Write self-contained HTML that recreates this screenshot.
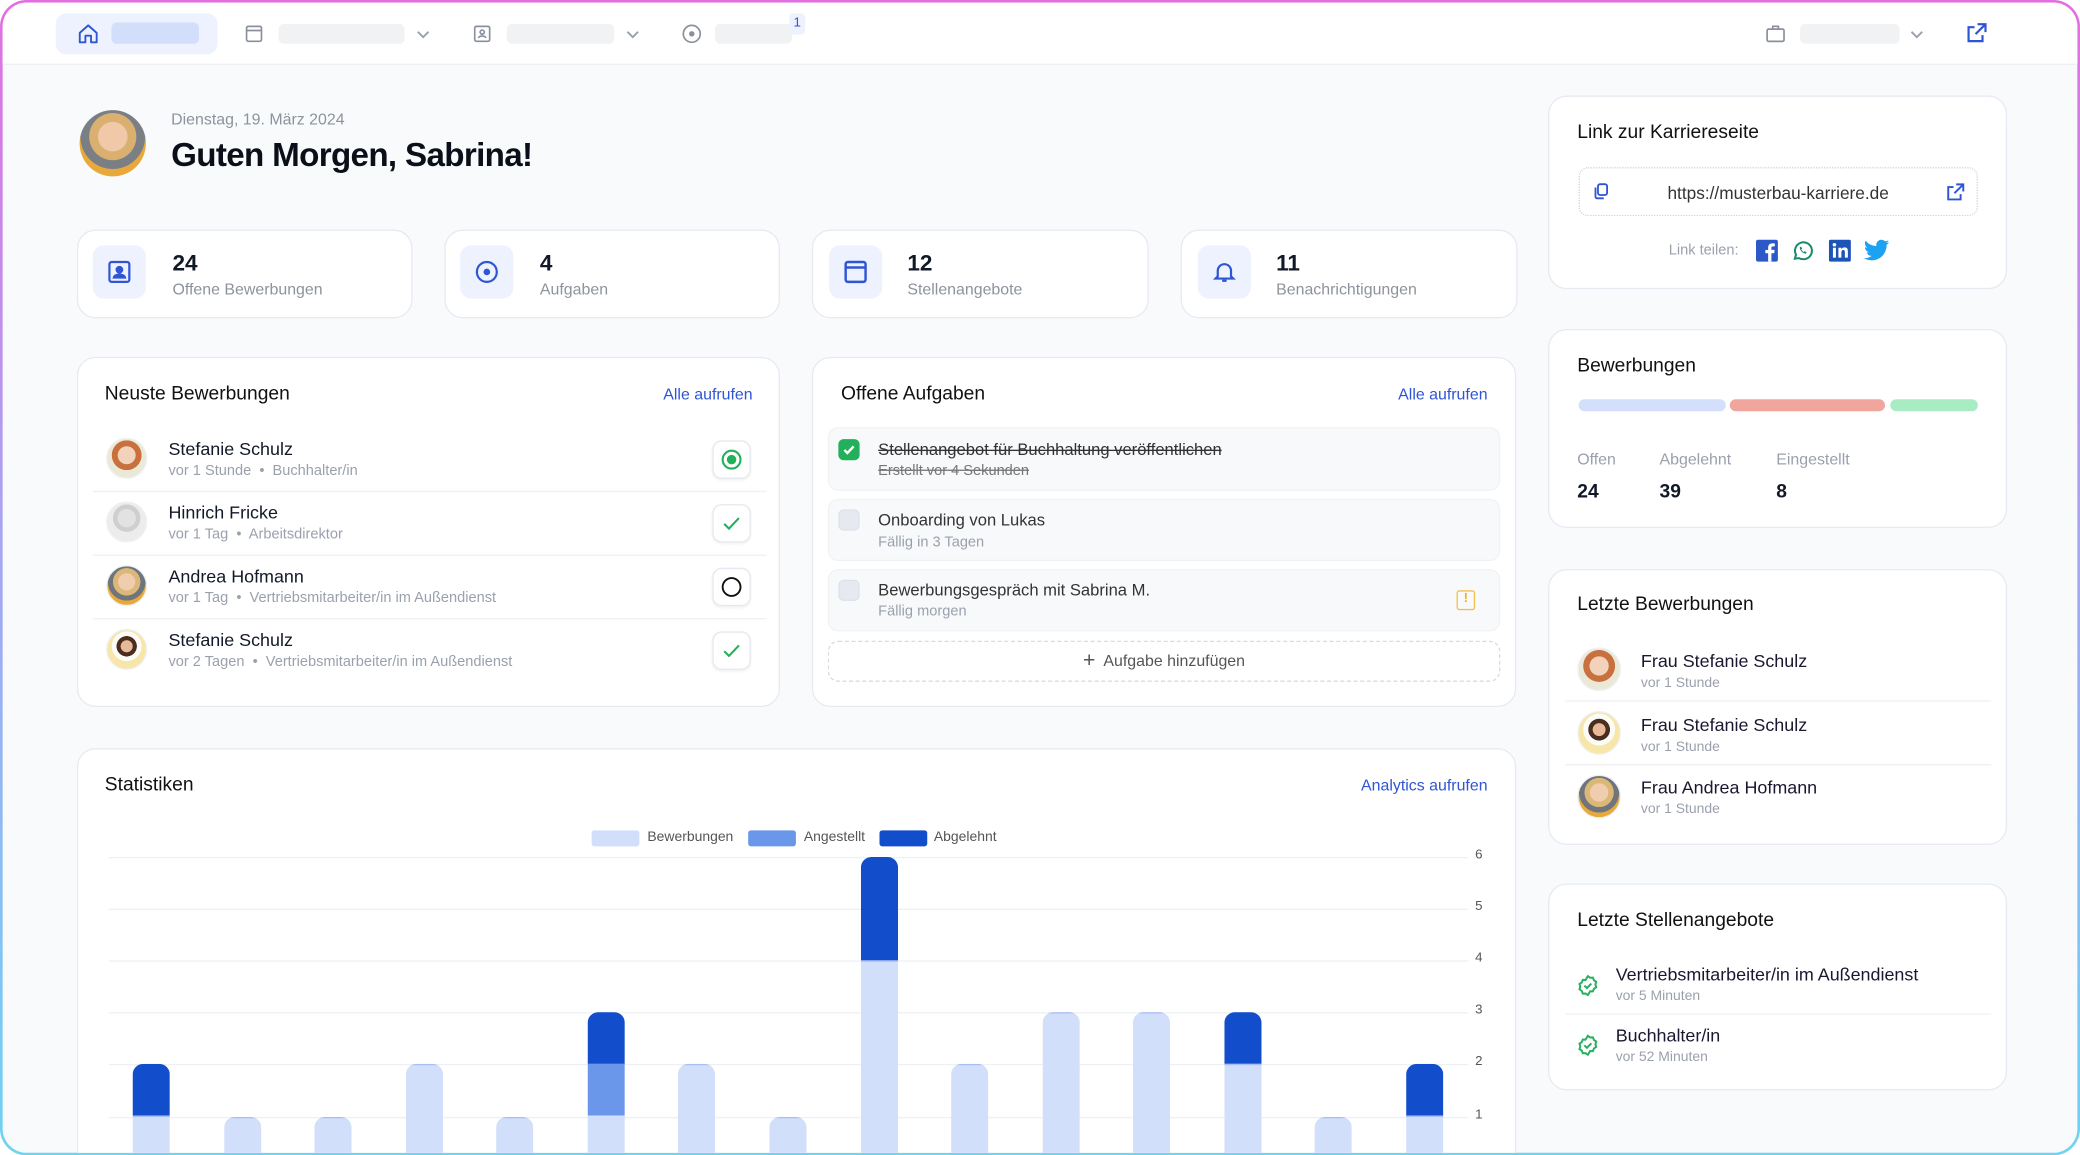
<!DOCTYPE html>
<html><head><meta charset="utf-8">
<style>
*{box-sizing:border-box;margin:0;padding:0}
html,body{width:2080px;height:1155px;overflow:hidden;background:#fff}
body{font-family:"Liberation Sans",sans-serif;color:#111827}
#w{position:absolute;left:0;top:0;width:1568px;height:871px;transform:scale(1.326531);transform-origin:0 0}
#frame{position:absolute;left:0;top:0;width:1568px;height:871px;border-radius:20px;background:linear-gradient(180deg,#e26fe0 0%,#a9a4f2 45%,#6fd3f2 100%);padding:2px}
#in{position:relative;width:100%;height:100%;border-radius:18px;background:#f8fafc;overflow:hidden}
.a{position:absolute}
.card{position:absolute;background:#fff;border:1px solid #e7ebf1;border-radius:14px}
.t15{font-size:14.5px;font-weight:500;color:#111}
.lnk{font-size:12px;color:#2f55d4}
.grey{color:#9aa1ad}
.bar{position:absolute;width:28px;border-radius:8px 8px 0 0;overflow:hidden;display:flex;flex-direction:column}
.L{background:#d2dffa;border-top:1.5px solid #a9bdf2}
.M{background:#6b97ea}
.D{background:#124ecb}
.gl{position:absolute;left:80px;width:1025px;height:1px;background:#eef0f3}
.yl{position:absolute;left:1110px;font-size:10px;color:#555}
.sep{position:absolute;height:1px;background:#eef0f3}
</style></head><body>
<div id="w"><div id="frame"><div id="in">
<!-- nav: coords inside #in are offset by 2 -->
<div class="a" style="left:-2px;top:-2px;width:1568px;height:49px;background:#fff;border-bottom:1px solid #edf0f4"></div>
<div class="a" style="left:40px;top:8px;width:122px;height:31px;background:#edf2fe;border-radius:8px"></div>
<svg class="a" style="left:56px;top:15px" width="17" height="17" viewBox="0 0 24 24" fill="none" stroke="#2f55d4" stroke-width="2" stroke-linejoin="round"><path d="M3 11l9-8 9 8v10h-6v-7H9v7H3z"/></svg>
<div class="a" style="left:82px;top:15px;width:66px;height:16px;background:#d3defb;border-radius:4px"></div>
<svg class="a" style="left:182px;top:16px" width="15" height="15" viewBox="0 0 24 24" fill="none" stroke="#8a919c" stroke-width="2"><rect x="3" y="3" width="18" height="18" rx="2"/><path d="M3 8h18"/></svg>
<div class="a" style="left:208px;top:16px;width:95px;height:15px;background:#f1f2f4;border-radius:4px"></div>
<svg class="a" style="left:311px;top:19px" width="12" height="10" viewBox="0 0 12 10" fill="none" stroke="#9aa1ad" stroke-width="1.5"><path d="M2 3l4 4 4-4"/></svg>
<svg class="a" style="left:354px;top:16px" width="15" height="15" viewBox="0 0 24 24" fill="none" stroke="#8a919c" stroke-width="2"><rect x="3" y="3" width="18" height="18" rx="2"/><circle cx="12" cy="10" r="2.5"/><path d="M7.5 17c1-3 8-3 9 0"/></svg>
<div class="a" style="left:380px;top:16px;width:81px;height:15px;background:#f1f2f4;border-radius:4px"></div>
<svg class="a" style="left:469px;top:19px" width="12" height="10" viewBox="0 0 12 10" fill="none" stroke="#9aa1ad" stroke-width="1.5"><path d="M2 3l4 4 4-4"/></svg>
<svg class="a" style="left:511px;top:15px" width="17" height="17" viewBox="0 0 24 24" fill="none" stroke="#8a919c" stroke-width="1.8"><circle cx="12" cy="12" r="9"/><circle cx="12" cy="12" r="2" fill="#8a919c"/></svg>
<div class="a" style="left:537px;top:16px;width:58px;height:15px;background:#f1f2f4;border-radius:4px"></div>
<div class="a" style="left:593px;top:8px;width:12px;height:16px;background:#eef2fe;border-radius:3px;font-size:10px;color:#2f55d4;text-align:center;line-height:16px">1</div>
<svg class="a" style="left:1328px;top:15px" width="17" height="17" viewBox="0 0 24 24" fill="none" stroke="#8a919c" stroke-width="1.8"><rect x="3" y="7" width="18" height="13" rx="1.5"/><path d="M9 7V4h6v3"/></svg>
<div class="a" style="left:1355px;top:16px;width:75px;height:15px;background:#f1f2f4;border-radius:4px"></div>
<svg class="a" style="left:1437px;top:19px" width="12" height="10" viewBox="0 0 12 10" fill="none" stroke="#9aa1ad" stroke-width="1.5"><path d="M2 3l4 4 4-4"/></svg>
<svg class="a" style="left:1479px;top:14px" width="18" height="18" viewBox="0 0 24 24" fill="none" stroke="#2f55d4" stroke-width="2.2"><path d="M13 3h8v8M21 3l-10 10M18 14v6H4V6h6"/></svg>

<!-- header -->
<div class="a" style="left:58px;top:81px;width:50px;height:50px;border-radius:50%;background:radial-gradient(circle at 50% 40%,#f1c9a8 0 28%,#d9b070 29% 45%,#7a7f86 46% 62%,#e8a93a 63%)"></div>
<div class="a grey" style="left:127px;top:81px;font-size:12px;color:#8d939c">Dienstag, 19. März 2024</div>
<div class="a" style="left:127px;top:101px;font-size:25px;font-weight:700;letter-spacing:-.5px;color:#0b0f19">Guten Morgen, Sabrina!</div>

<!-- stat cards -->
<div class="card" style="left:56px;top:171px;width:253px;height:67px"></div>
<div class="card" style="left:333px;top:171px;width:253px;height:67px"></div>
<div class="card" style="left:610px;top:171px;width:254px;height:67px"></div>
<div class="card" style="left:888px;top:171px;width:254px;height:67px"></div>
<div class="a" style="left:68px;top:183px;width:40px;height:40px;background:#eef2fe;border-radius:8px"></div>
<div class="a" style="left:345px;top:183px;width:40px;height:40px;background:#eef2fe;border-radius:8px"></div>
<div class="a" style="left:623px;top:183px;width:40px;height:40px;background:#eef2fe;border-radius:8px"></div>
<div class="a" style="left:901px;top:183px;width:40px;height:40px;background:#eef2fe;border-radius:8px"></div>
<svg class="a" style="left:78px;top:193px" width="20" height="20" viewBox="0 0 24 24" fill="none" stroke="#2f55d4" stroke-width="2"><rect x="3" y="3" width="18" height="18" rx="2"/><circle cx="12" cy="10" r="2.5" fill="#2f55d4"/><path d="M7 17c1-3.5 9-3.5 10 0z" fill="#2f55d4"/></svg>
<svg class="a" style="left:355px;top:193px" width="20" height="20" viewBox="0 0 24 24" fill="none" stroke="#2f55d4" stroke-width="2"><circle cx="12" cy="12" r="9"/><circle cx="12" cy="12" r="2" fill="#2f55d4"/></svg>
<svg class="a" style="left:633px;top:193px" width="20" height="20" viewBox="0 0 24 24" fill="none" stroke="#2f55d4" stroke-width="2.2"><rect x="3" y="3" width="18" height="18" rx="2"/><path d="M3 8h18"/></svg>
<svg class="a" style="left:911px;top:193px" width="20" height="20" viewBox="0 0 24 24" fill="none" stroke="#2f55d4" stroke-width="2"><path d="M6 16V11a6 6 0 0112 0v5l2 2H4z"/><path d="M10 20h4"/></svg>
<div class="a" style="left:128px;top:187px;font-size:17px;font-weight:700">24</div>
<div class="a" style="left:128px;top:209px;font-size:12px;color:#8d939c">Offene Bewerbungen</div>
<div class="a" style="left:405px;top:187px;font-size:17px;font-weight:700">4</div>
<div class="a" style="left:405px;top:209px;font-size:12px;color:#8d939c">Aufgaben</div>
<div class="a" style="left:682px;top:187px;font-size:17px;font-weight:700">12</div>
<div class="a" style="left:682px;top:209px;font-size:12px;color:#8d939c">Stellenangebote</div>
<div class="a" style="left:960px;top:187px;font-size:17px;font-weight:700">11</div>
<div class="a" style="left:960px;top:209px;font-size:12px;color:#8d939c">Benachrichtigungen</div>

<!-- Neuste Bewerbungen -->
<div class="card" style="left:56px;top:267px;width:530px;height:264px"></div>
<div class="a t15" style="left:77px;top:287px">Neuste Bewerbungen</div>
<div class="a lnk" style="left:498px;top:288px">Alle aufrufen</div>
<div class="sep" style="left:68px;top:368px;width:508px"></div>
<div class="sep" style="left:68px;top:416px;width:508px"></div>
<div class="sep" style="left:68px;top:464px;width:508px"></div>
<div class="a" style="left:78px;top:328px;width:31px;height:31px;border-radius:50%;border:1.5px solid #eef0f3;background:radial-gradient(circle at 50% 42%,#f3d2bc 0 30%,#c8703e 31% 50%,#ece8d8 51%)"></div>
<div class="a" style="left:78px;top:376px;width:31px;height:31px;border-radius:50%;border:1.5px solid #eef0f3;background:radial-gradient(circle at 50% 40%,#e2e2e2 0 30%,#cfcfcf 31% 45%,#ececec 46%)"></div>
<div class="a" style="left:78px;top:424px;width:31px;height:31px;border-radius:50%;border:1.5px solid #eef0f3;background:radial-gradient(circle at 50% 40%,#f1cdb0 0 28%,#dcb878 29% 45%,#6f757c 46% 62%,#e8a93a 63%)"></div>
<div class="a" style="left:78px;top:472px;width:31px;height:31px;border-radius:50%;border:1.5px solid #eef0f3;background:radial-gradient(circle at 50% 42%,#e8b89a 0 20%,#4a2d1f 21% 34%,#fbfbf8 35% 50%,#f8e6a8 51%)"></div>
<div class="a" style="left:125px;top:329px;font-size:13.5px;font-weight:500">Stefanie Schulz</div>
<div class="a" style="left:125px;top:347px;font-size:11px;color:#9aa1ad">vor 1 Stunde &nbsp;•&nbsp; Buchhalter/in</div>
<div class="a" style="left:125px;top:377px;font-size:13.5px;font-weight:500">Hinrich Fricke</div>
<div class="a" style="left:125px;top:395px;font-size:11px;color:#9aa1ad">vor 1 Tag &nbsp;•&nbsp; Arbeitsdirektor</div>
<div class="a" style="left:125px;top:425px;font-size:13.5px;font-weight:500">Andrea Hofmann</div>
<div class="a" style="left:125px;top:443px;font-size:11px;color:#9aa1ad">vor 1 Tag &nbsp;•&nbsp; Vertriebsmitarbeiter/in im Außendienst</div>
<div class="a" style="left:125px;top:473px;font-size:13.5px;font-weight:500">Stefanie Schulz</div>
<div class="a" style="left:125px;top:491px;font-size:11px;color:#9aa1ad">vor 2 Tagen &nbsp;•&nbsp; Vertriebsmitarbeiter/in im Außendienst</div>
<div class="a" style="left:535px;top:330px;width:29px;height:29px;border:1px solid #e5e8ee;border-radius:7px;box-shadow:0 1px 2px rgba(0,0,0,.06)"></div>
<div class="a" style="left:535px;top:378px;width:29px;height:29px;border:1px solid #e5e8ee;border-radius:7px;box-shadow:0 1px 2px rgba(0,0,0,.06)"></div>
<div class="a" style="left:535px;top:426px;width:29px;height:29px;border:1px solid #e5e8ee;border-radius:7px;box-shadow:0 1px 2px rgba(0,0,0,.06)"></div>
<div class="a" style="left:535px;top:474px;width:29px;height:29px;border:1px solid #e5e8ee;border-radius:7px;box-shadow:0 1px 2px rgba(0,0,0,.06)"></div>
<svg class="a" style="left:540px;top:335px" width="19" height="19" viewBox="0 0 24 24" fill="none" stroke="#22b05a" stroke-width="2"><circle cx="12" cy="12" r="8.5"/><circle cx="12" cy="12" r="3.5" fill="#22b05a"/></svg>
<svg class="a" style="left:540px;top:383px" width="19" height="19" viewBox="0 0 24 24" fill="none" stroke="#22b05a" stroke-width="2"><path d="M5 12.5l4.5 4.5L19 7"/></svg>
<svg class="a" style="left:540px;top:431px" width="19" height="19" viewBox="0 0 24 24" fill="none" stroke="#111" stroke-width="1.8"><circle cx="12" cy="12" r="8.5"/></svg>
<svg class="a" style="left:540px;top:479px" width="19" height="19" viewBox="0 0 24 24" fill="none" stroke="#22b05a" stroke-width="2"><path d="M5 12.5l4.5 4.5L19 7"/></svg>

<!-- Offene Aufgaben -->
<div class="card" style="left:610px;top:267px;width:531px;height:264px"></div>
<div class="a t15" style="left:632px;top:287px">Offene Aufgaben</div>
<div class="a lnk" style="left:1052px;top:288px">Alle aufrufen</div>
<div class="a" style="left:622px;top:320px;width:507px;height:48px;background:#f8f9fb;border:1px solid #f0f2f5;border-radius:8px"></div>
<div class="a" style="left:622px;top:374px;width:507px;height:47px;background:#f8f9fb;border:1px solid #f0f2f5;border-radius:8px"></div>
<div class="a" style="left:622px;top:427px;width:507px;height:47px;background:#f8f9fb;border:1px solid #f0f2f5;border-radius:8px"></div>
<div class="a" style="left:630px;top:329px;width:16px;height:16px;background:#22b05a;border-radius:4px"></div>
<svg class="a" style="left:632px;top:331px" width="12" height="12" viewBox="0 0 12 12" fill="none" stroke="#fff" stroke-width="1.8"><path d="M2.5 6.2l2.3 2.3 4.7-5"/></svg>
<div class="a" style="left:630px;top:382px;width:16px;height:16px;background:#e6eaf0;border:1px solid #dde2ea;border-radius:4px"></div>
<div class="a" style="left:630px;top:435px;width:16px;height:16px;background:#e6eaf0;border:1px solid #dde2ea;border-radius:4px"></div>
<div class="a" style="left:660px;top:330px;font-size:12.5px;color:#333;text-decoration:line-through">Stellenangebot für Buchhaltung veröffentlichen</div>
<div class="a" style="left:660px;top:347px;font-size:11px;color:#777;text-decoration:line-through">Erstellt vor 4 Sekunden</div>
<div class="a" style="left:660px;top:383px;font-size:12.5px;color:#333">Onboarding von Lukas</div>
<div class="a" style="left:660px;top:401px;font-size:11px;color:#9aa1ad">Fällig in 3 Tagen</div>
<div class="a" style="left:660px;top:436px;font-size:12.5px;color:#333">Bewerbungsgespräch mit Sabrina M.</div>
<div class="a" style="left:660px;top:453px;font-size:11px;color:#9aa1ad">Fällig morgen</div>
<div class="a" style="left:1096px;top:443px;width:14px;height:15px;border:1.5px solid #f2c04c;border-radius:2px;color:#f2b020;font-size:10px;font-weight:700;text-align:center;line-height:12px">!</div>
<div class="a" style="left:622px;top:481px;width:507px;height:31px;border:1.5px dashed #d6dbe3;border-radius:8px;text-align:center;font-size:12px;color:#555;line-height:28px"><span style="font-size:16px;vertical-align:-1px">+</span>&nbsp; Aufgabe hinzufügen</div>

<!-- Statistiken -->
<div class="card" style="left:56px;top:562px;width:1085px;height:340px"></div>
<div class="a t15" style="left:77px;top:582px">Statistiken</div>
<div class="a lnk" style="left:1024px;top:583px">Analytics aufrufen</div>
<div class="a" style="left:444px;top:624px;width:36px;height:12px;background:#d2dffa;border-radius:2px"></div>
<div class="a" style="left:486px;top:623px;font-size:10.5px;color:#555">Bewerbungen</div>
<div class="a" style="left:562px;top:624px;width:36px;height:12px;background:#6b97ea;border-radius:2px"></div>
<div class="a" style="left:604px;top:623px;font-size:10.5px;color:#555">Angestellt</div>
<div class="a" style="left:661px;top:624px;width:36px;height:12px;background:#124ecb;border-radius:2px"></div>
<div class="a" style="left:702px;top:623px;font-size:10.5px;color:#555">Abgelehnt</div>
<div class="gl" style="top:644px"></div><div class="gl" style="top:683px"></div><div class="gl" style="top:722px"></div><div class="gl" style="top:761px"></div><div class="gl" style="top:800px"></div><div class="gl" style="top:840px"></div>
<div class="yl" style="top:637px">6</div><div class="yl" style="top:676px">5</div><div class="yl" style="top:715px">4</div><div class="yl" style="top:754px">3</div><div class="yl" style="top:793px">2</div><div class="yl" style="top:833px">1</div>
<div class="bar" style="left:98px;top:800px;height:79px"><div class="D" style="height:39px"></div><div class="L" style="flex:1"></div></div>
<div class="bar" style="left:167px;top:840px;height:40px"><div class="L" style="flex:1"></div></div>
<div class="bar" style="left:235px;top:840px;height:40px"><div class="L" style="flex:1"></div></div>
<div class="bar" style="left:304px;top:800px;height:79px"><div class="L" style="flex:1"></div></div>
<div class="bar" style="left:372px;top:840px;height:40px"><div class="L" style="flex:1"></div></div>
<div class="bar" style="left:441px;top:761px;height:118px"><div class="D" style="height:39px"></div><div class="M" style="height:39px"></div><div class="L" style="flex:1;border-top:0"></div></div>
<div class="bar" style="left:509px;top:800px;height:79px"><div class="L" style="flex:1"></div></div>
<div class="bar" style="left:578px;top:840px;height:40px"><div class="L" style="flex:1"></div></div>
<div class="bar" style="left:647px;top:644px;height:236px"><div class="D" style="height:78px"></div><div class="L" style="flex:1"></div></div>
<div class="bar" style="left:715px;top:800px;height:79px"><div class="L" style="flex:1"></div></div>
<div class="bar" style="left:784px;top:761px;height:118px"><div class="L" style="flex:1"></div></div>
<div class="bar" style="left:852px;top:761px;height:118px"><div class="L" style="flex:1"></div></div>
<div class="bar" style="left:921px;top:761px;height:118px"><div class="D" style="height:39px"></div><div class="L" style="flex:1"></div></div>
<div class="bar" style="left:989px;top:840px;height:40px"><div class="L" style="flex:1"></div></div>
<div class="bar" style="left:1058px;top:800px;height:79px"><div class="D" style="height:39px"></div><div class="L" style="flex:1"></div></div>

<!-- right column -->
<div class="card" style="left:1165px;top:70px;width:346px;height:146px"></div>
<div class="a t15" style="left:1187px;top:90px">Link zur Karriereseite</div>
<div class="a" style="left:1188px;top:124px;width:301px;height:37px;border:1.5px dotted #cfd5de;border-radius:7px"></div>
<svg class="a" style="left:1197px;top:135px" width="15" height="15" viewBox="0 0 24 24" fill="none" stroke="#2f55d4" stroke-width="2.2"><rect x="9" y="3" width="11" height="13" rx="2.5"/><path d="M6 7v11a2 2 0 002 2h8"/></svg>
<div class="a" style="left:1255px;top:136px;font-size:13px;color:#333">https://musterbau-karriere.de</div>
<svg class="a" style="left:1464px;top:135px" width="16" height="16" viewBox="0 0 24 24" fill="none" stroke="#2f55d4" stroke-width="2.2"><path d="M13 3h8v8M21 3l-10 10M18 14v6H4V6h6"/></svg>
<div class="a" style="left:1256px;top:181px;font-size:11px;color:#9aa1ad">Link teilen:</div>
<svg class="a" style="left:1321px;top:178px" width="18" height="18" viewBox="0 0 24 24"><rect x="1" y="1" width="22" height="22" rx="2" fill="#2c58c8"/><path d="M16.5 23v-8.5h2.8l.4-3.3h-3.2V9.2c0-1 .3-1.6 1.7-1.6h1.7V4.7c-.3 0-1.3-.1-2.5-.1-2.5 0-4.2 1.5-4.2 4.3v2.4h-2.8v3.3h2.8V23z" fill="#fff"/></svg>
<svg class="a" style="left:1348px;top:178px" width="18" height="18" viewBox="0 0 24 24" fill="none" stroke="#178a6a" stroke-width="2"><path d="M4 20l1.2-4A8.5 8.5 0 1112 20.5a8.4 8.4 0 01-4-1z"/><path d="M9 8.5c0 3 2.5 6 6 6.5l1-1.5-2-1-1 .8c-1-.5-2-1.5-2.5-2.5l.8-1-1-2z" fill="#178a6a" stroke="none"/></svg>
<svg class="a" style="left:1376px;top:178px" width="18" height="18" viewBox="0 0 24 24"><rect x="1" y="1" width="22" height="22" rx="1.5" fill="#1d54b8"/><rect x="5" y="9" width="3" height="10" fill="#fff"/><circle cx="6.5" cy="6" r="1.8" fill="#fff"/><path d="M10.5 9h3v1.5c.6-1 1.7-1.8 3.3-1.8 2.4 0 3.2 1.5 3.2 4V19h-3v-5.5c0-1.3-.4-2.2-1.6-2.2-1.3 0-1.9.9-1.9 2.2V19h-3z" fill="#fff"/></svg>
<svg class="a" style="left:1403px;top:178px" width="20" height="18" viewBox="0 0 24 20"><path d="M23 2.3a9 9 0 01-2.7.8A4.7 4.7 0 0022.4.5a9.4 9.4 0 01-3 1.1A4.7 4.7 0 0011.4 5.9 13.4 13.4 0 011.7 1a4.7 4.7 0 001.4 6.3 4.6 4.6 0 01-2.1-.6 4.7 4.7 0 003.8 4.6 4.7 4.7 0 01-2.1.1 4.7 4.7 0 004.4 3.3A9.5 9.5 0 010 16.6 13.3 13.3 0 007.2 18.7c8.7 0 13.4-7.2 13.4-13.4v-.6A9.5 9.5 0 0023 2.3z" fill="#1da1f2"/></svg>

<div class="card" style="left:1165px;top:246px;width:346px;height:150px"></div>
<div class="a t15" style="left:1187px;top:266px">Bewerbungen</div>
<div class="a" style="left:1188px;top:299px;width:111px;height:9px;border-radius:5px;background:#d4e0fb"></div>
<div class="a" style="left:1302px;top:299px;width:117px;height:9px;border-radius:5px;background:#f0a59d"></div>
<div class="a" style="left:1423px;top:299px;width:66px;height:9px;border-radius:5px;background:#a9ecc4"></div>
<div class="a" style="left:1187px;top:337px;font-size:12px;color:#9aa1ad">Offen</div>
<div class="a" style="left:1249px;top:337px;font-size:12px;color:#9aa1ad">Abgelehnt</div>
<div class="a" style="left:1337px;top:337px;font-size:12px;color:#9aa1ad">Eingestellt</div>
<div class="a" style="left:1187px;top:361px;font-size:14.5px;font-weight:700">24</div>
<div class="a" style="left:1249px;top:361px;font-size:14.5px;font-weight:700">39</div>
<div class="a" style="left:1337px;top:361px;font-size:14.5px;font-weight:700">8</div>

<div class="card" style="left:1165px;top:427px;width:346px;height:208px"></div>
<div class="a t15" style="left:1187px;top:446px">Letzte Bewerbungen</div>
<div class="sep" style="left:1178px;top:526px;width:321px"></div>
<div class="sep" style="left:1178px;top:574px;width:321px"></div>
<div class="a" style="left:1187px;top:486px;width:33px;height:33px;border-radius:50%;border:1.5px solid #eef0f3;background:radial-gradient(circle at 50% 42%,#f3d2bc 0 30%,#c8703e 31% 50%,#ece8d8 51%)"></div>
<div class="a" style="left:1187px;top:534px;width:33px;height:33px;border-radius:50%;border:1.5px solid #eef0f3;background:radial-gradient(circle at 50% 42%,#e8b89a 0 20%,#4a2d1f 21% 34%,#fbfbf8 35% 50%,#f8e6a8 51%)"></div>
<div class="a" style="left:1187px;top:582px;width:33px;height:33px;border-radius:50%;border:1.5px solid #eef0f3;background:radial-gradient(circle at 50% 40%,#f1cdb0 0 28%,#dcb878 29% 45%,#6f757c 46% 62%,#e8a93a 63%)"></div>
<div class="a" style="left:1235px;top:489px;font-size:13.5px;font-weight:500;color:#1a1730">Frau Stefanie Schulz</div>
<div class="a" style="left:1235px;top:507px;font-size:10.5px;color:#9aa1ad">vor 1 Stunde</div>
<div class="a" style="left:1235px;top:537px;font-size:13.5px;font-weight:500;color:#1a1730">Frau Stefanie Schulz</div>
<div class="a" style="left:1235px;top:555px;font-size:10.5px;color:#9aa1ad">vor 1 Stunde</div>
<div class="a" style="left:1235px;top:584px;font-size:13.5px;font-weight:500;color:#1a1730">Frau Andrea Hofmann</div>
<div class="a" style="left:1235px;top:602px;font-size:10.5px;color:#9aa1ad">vor 1 Stunde</div>

<div class="card" style="left:1165px;top:664px;width:346px;height:156px"></div>
<div class="a t15" style="left:1187px;top:684px">Letzte Stellenangebote</div>
<div class="sep" style="left:1178px;top:762px;width:321px"></div>
<svg class="a" style="left:1186px;top:732px" width="18" height="18" viewBox="0 0 24 24" fill="none" stroke="#28b060" stroke-width="2"><path d="M12 2.5l2.3 1.6 2.8-.1 1 2.6 2.3 1.6-.8 2.7.8 2.7-2.3 1.6-1 2.6-2.8-.1L12 21.5l-2.3-1.6-2.8.1-1-2.6-2.3-1.6.8-2.7-.8-2.7 2.3-1.6 1-2.6 2.8.1z"/><path d="M8.5 12l2.5 2.5 4.5-4.5"/></svg>
<svg class="a" style="left:1186px;top:777px" width="18" height="18" viewBox="0 0 24 24" fill="none" stroke="#28b060" stroke-width="2"><path d="M12 2.5l2.3 1.6 2.8-.1 1 2.6 2.3 1.6-.8 2.7.8 2.7-2.3 1.6-1 2.6-2.8-.1L12 21.5l-2.3-1.6-2.8.1-1-2.6-2.3-1.6.8-2.7-.8-2.7 2.3-1.6 1-2.6 2.8.1z"/><path d="M8.5 12l2.5 2.5 4.5-4.5"/></svg>
<div class="a" style="left:1216px;top:725px;font-size:13.5px;font-weight:500;color:#1a1730">Vertriebsmitarbeiter/in im Außendienst</div>
<div class="a" style="left:1216px;top:743px;font-size:10.5px;color:#9aa1ad">vor 5 Minuten</div>
<div class="a" style="left:1216px;top:771px;font-size:13.5px;font-weight:500;color:#1a1730">Buchhalter/in</div>
<div class="a" style="left:1216px;top:789px;font-size:10.5px;color:#9aa1ad">vor 52 Minuten</div>
</div></div></div>
</body></html>
